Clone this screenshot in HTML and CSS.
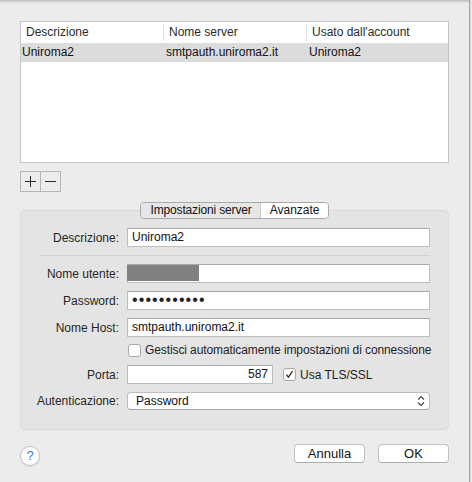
FILE: index.html
```html
<!DOCTYPE html>
<html lang="it">
<head>
  <meta charset="UTF-8">
  <title>Server SMTP</title>
  <link rel="stylesheet" href="styles.css">
</head>
<body>
  <div class="screen">
    <div class="dialog">
      <!-- lista server -->
      <div class="table">
        <div class="thead">
          <div class="th">Descrizione</div>
          <div class="th sep">Nome server</div>
          <div class="th sep">Usato dall'account</div>
        </div>
        <div class="trow selected">
          <div class="td">Uniroma2</div>
          <div class="td">smtpauth.uniroma2.it</div>
          <div class="td">Uniroma2</div>
        </div>
      </div>

      <div class="addrem">
        <div class="sq">
          <svg width="11" height="11" viewBox="0 0 11 11"><path d="M5.5 0v11M0 5.5h11" stroke="#2b2b2b" stroke-width="1"/></svg>
        </div>
        <div class="sq">
          <svg width="11" height="11" viewBox="0 0 11 11"><path d="M0 5.5h11" stroke="#2b2b2b" stroke-width="1"/></svg>
        </div>
      </div>

      <!-- impostazioni -->
      <div class="group">
        <div class="tabs">
          <div class="tab current">Impostazioni server</div>
          <div class="tab">Avanzate</div>
        </div>

        <div class="form">
          <div class="row">
            <label>Descrizione:</label>
            <div class="field">Uniroma2</div>
          </div>
          <div class="divider"></div>
          <div class="row">
            <label>Nome utente:</label>
            <div class="field redacted"><span class="blot"></span></div>
          </div>
          <div class="row">
            <label>Password:</label>
            <div class="field dots">•••••••••••</div>
          </div>
          <div class="row">
            <label>Nome Host:</label>
            <div class="field">smtpauth.uniroma2.it</div>
          </div>
          <div class="row check-row">
            <span></span>
            <div class="check"><span class="box"></span>Gestisci automaticamente impostazioni di connessione</div>
          </div>
          <div class="row">
            <label>Porta:</label>
            <div class="port-line">
              <div class="field port">587</div>
              <div class="check tls">
                <span class="box">
                  <svg width="11" height="11" viewBox="0 0 11 11"><path d="M2.5 5.8l2 2.4 4-6" fill="none" stroke="#333" stroke-width="1.4"/></svg>
                </span>Usa TLS/SSL
              </div>
            </div>
          </div>
          <div class="row">
            <label>Autenticazione:</label>
            <div class="popup">
              <span>Password</span>
              <svg width="8" height="12" viewBox="0 0 8 12"><path d="M1 4.5l3-3 3 3M1 7.5l3 3 3-3" fill="none" stroke="#444" stroke-width="1.1"/></svg>
            </div>
          </div>
        </div>
      </div>

      <div class="footer">
        <div class="help">?</div>
        <div class="buttons">
          <div class="btn">Annulla</div>
          <div class="btn">OK</div>
        </div>
      </div>
    </div>
    <div class="edge"></div>
  </div>
</body>
</html>
```

FILE: styles.css
```css
body {
  margin: 0;
  padding: 0;
  background-color: #ececec;
  font-family: "Liberation Sans", Arial, sans-serif;
  font-size: 12px;
  color: #1e1e1e;
}

.screen {
  display: flex;
  width: 472px;
  height: 482px;
  overflow: hidden;
}

.dialog {
  width: 470px;
  height: 482px;
  box-sizing: border-box;
  padding: 21px 20px 0 20px;
  border-right: 1px solid #a3a3a3;
  background: linear-gradient(#b9b9b9, #dedede 2px, #ececec 4px);
}

.edge {
  width: 1px;
  background-color: #d9d9d9;
}

/* table */
.table {
  height: 142px;
  box-sizing: border-box;
  border: 1px solid #c7c7c7;
  background-color: white;
}

.thead,
.trow {
  display: grid;
  grid-template-columns: 142px 143px 1fr;
}

.thead {
  height: 21px;
}

.th {
  padding-left: 5px;
  line-height: 21px;
  color: #2a2a2a;
}

.th.sep {
  border-left: 1px solid #e3e3e3;
  margin: 2px 0;
  line-height: 17px;
}

.trow {
  height: 19px;
}

.selected {
  background-color: #dcdcdc;
}

.td {
  line-height: 19px;
  padding-left: 1px;
  color: #111;
}

.td + .td {
  padding-left: 3px;
}

/* + - */
.addrem {
  display: flex;
  margin-top: 8px;
}

.sq {
  width: 19px;
  height: 19px;
  border: 1px solid #b5b5b5;
  display: flex;
  align-items: center;
  justify-content: center;
}

.sq + .sq {
  border-left: none;
}

/* group box */
.group {
  margin-top: 18px;
  height: 220px;
  box-sizing: border-box;
  border: 1px solid #dadada;
  border-radius: 5px;
  background-color: #e4e4e4;
  display: flex;
  flex-direction: column;
}

.tabs {
  display: flex;
  align-self: center;
  margin-top: -9px;
  height: 17px;
  box-sizing: border-box;
  border: 1px solid #a9a9a9;
  border-radius: 4px;
  overflow: hidden;
  font-size: 12px;
}

.tab {
  line-height: 15px;
  background-color: white;
  padding: 0 8px 0 9px;
  color: #111;
}

.tab.current {
  background-color: #e6e6e6;
  border-right: 1px solid #c9c9c9;
  padding: 0 8px 0 9px;
  letter-spacing: -0.15px;
}

.form {
  display: flex;
  flex-direction: column;
  padding: 9px 18px 0 0;
}

.row {
  display: grid;
  grid-template-columns: 98px 1fr;
  column-gap: 8px;
  align-items: center;
  margin-bottom: 8px;
}

.row label {
  text-align: right;
  color: #262626;
}

.field {
  height: 19px;
  box-sizing: border-box;
  border: 1px solid #bdbdbd;
  border-top-color: #a9a9a9;
  background-color: white;
  padding-left: 4px;
  line-height: 17px;
  color: #111;
}

.redacted {
  padding-left: 0;
  position: relative;
}

.blot {
  position: absolute;
  left: -1px;
  top: 0;
  width: 72px;
  height: 16px;
  background-color: #808080;
}

.dots {
  font-size: 16px;
  letter-spacing: 1.1px;
  line-height: 16px;
  color: #222;
}

.divider {
  height: 1px;
  background-color: #cfcfcf;
  margin: 0 0 8px 20px;
}

.check-row {
  margin-top: -2px;
  margin-bottom: 8px;
}

.check {
  display: flex;
  align-items: center;
  white-space: nowrap;
  color: #1e1e1e;
}

.check-row .check {
  letter-spacing: -0.1px;
}

.box {
  width: 13px;
  height: 13px;
  box-sizing: border-box;
  border: 1px solid #a8a8a8;
  border-radius: 3px;
  background-color: white;
  margin-right: 4px;
  display: flex;
  align-items: center;
  justify-content: center;
  flex-shrink: 0;
}

.check-row .box {
  margin-left: 1px;
}

.port-line {
  display: flex;
  align-items: center;
}

.port {
  width: 146px;
  text-align: right;
  padding-right: 4px;
}

.tls {
  margin-left: 10px;
}

.popup {
  height: 18px;
  box-sizing: border-box;
  border: 1px solid #bdbdbd;
  border-bottom-color: #a6a6a6;
  border-radius: 4px;
  background-color: white;
  display: flex;
  align-items: center;
  justify-content: space-between;
  padding: 0 4px 0 8px;
  color: #111;
}

/* footer */
.footer {
  display: flex;
  align-items: flex-start;
  justify-content: space-between;
  margin-top: 14px;
}

.help {
  width: 20px;
  height: 20px;
  box-sizing: border-box;
  border: 1px solid #c4c4c4;
  border-radius: 50%;
  background-color: white;
  color: #2d7cf6;
  font-size: 13px;
  text-align: center;
  line-height: 18px;
  margin-top: 2px;
  box-shadow: 0 0.5px 1px rgba(0, 0, 0, 0.15);
}

.buttons {
  display: flex;
  gap: 13px;
}

.btn {
  width: 71px;
  height: 19px;
  box-sizing: border-box;
  border: 1px solid #c2c2c2;
  border-bottom-color: #acacac;
  border-radius: 4px;
  background-color: white;
  text-align: center;
  font-size: 13px;
  line-height: 17px;
  color: #111;
}
```
